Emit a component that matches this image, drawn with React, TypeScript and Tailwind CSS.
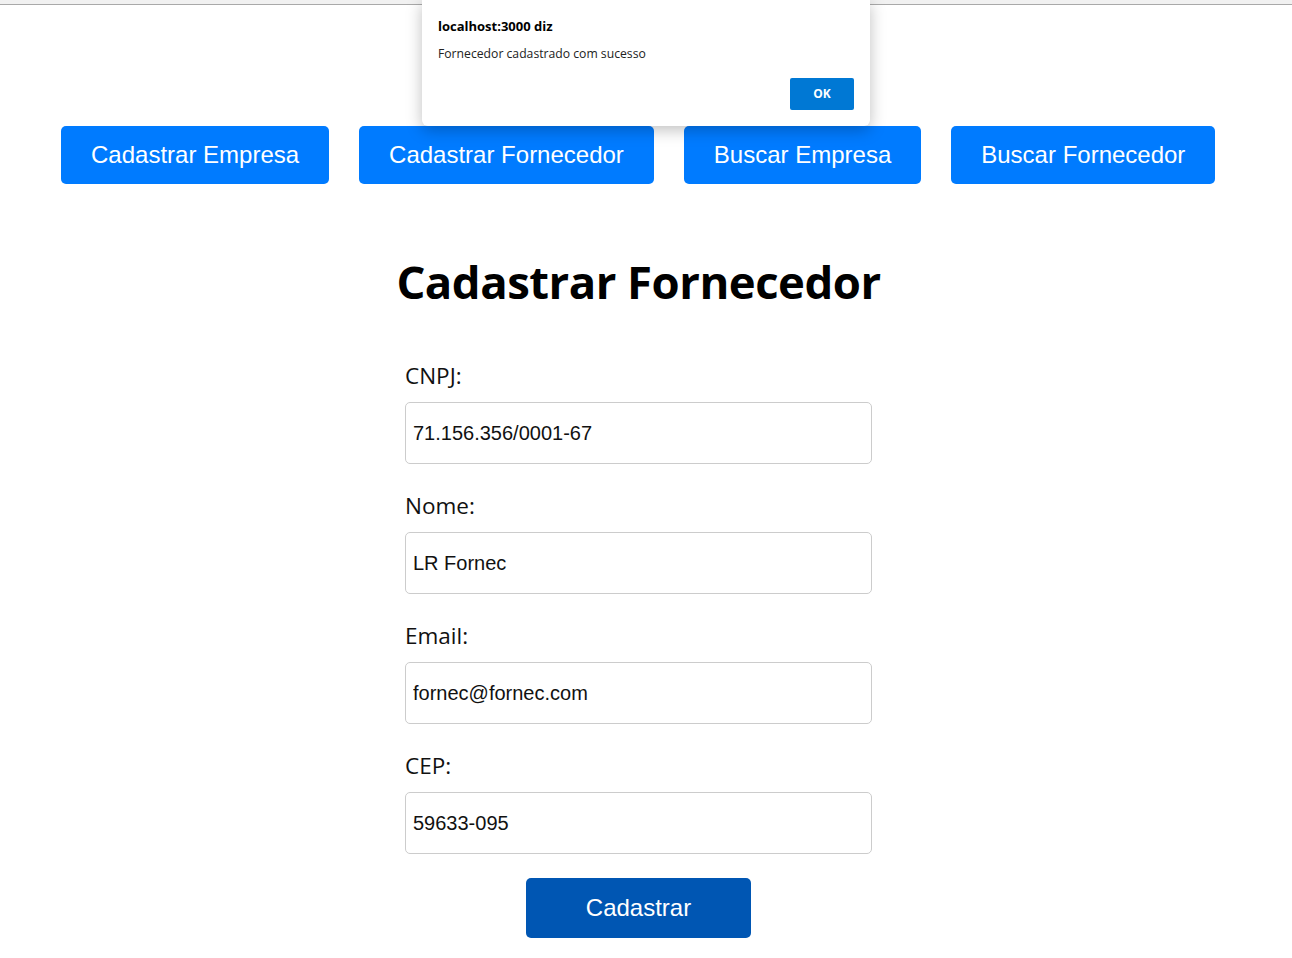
const navItems = [
  "Cadastrar Empresa",
  "Cadastrar Fornecedor",
  "Buscar Empresa",
  "Buscar Fornecedor",
];

const fields = [
  { label: "CNPJ:", value: "71.156.356/0001-67" },
  { label: "Nome:", value: "LR Fornec" },
  { label: "Email:", value: "fornec@fornec.com" },
  { label: "CEP:", value: "59633-095" },
];

const App = () => {
  return (
    <div className="relative min-h-[958px] bg-white">
      {/* browser strip */}
      <div className="h-[5px] bg-[#f1f1f1] border-b border-[#a9a9a9]" />

      <div className="w-[1277px]">
        {/* nav buttons */}
        <nav className="flex gap-[30px] pl-[61px] pt-[121px]">
          {navItems.map((item) => (
            <button
              key={item}
              className="h-[58px] px-[30px] rounded-[5px] bg-[#007bff] text-white text-[24px] font-['Liberation_Sans',Arial,sans-serif]"
            >
              {item}
            </button>
          ))}
        </nav>

        {/* form */}
        <main className="flex flex-col items-center">
          <h1 className="mt-[69px] text-[45.5px] leading-[56px] font-bold text-black font-['Open_Sans','Noto_Sans',sans-serif] tracking-[-0.5px]">
            Cadastrar Fornecedor
          </h1>

          <form className="w-[467px] mt-[53px] flex flex-col">
            {fields.map((f) => (
              <div key={f.label} className="flex flex-col mb-[28px]">
                <label className="text-[22.5px] leading-[28px] text-[#111] font-['Open_Sans','Noto_Sans',sans-serif] mb-[12px]">
                  {f.label}
                </label>
                <input
                  readOnly
                  value={f.value}
                  className="h-[62px] px-[7px] border border-[#cccccc] rounded-[5px] text-[20px] text-[#111] font-['Liberation_Sans',Arial,sans-serif] outline-none"
                />
              </div>
            ))}
            <button
              type="button"
              className="self-center -mt-[4px] w-[225px] h-[60px] rounded-[5px] bg-[#0056b3] text-white text-[24px] font-['Liberation_Sans',Arial,sans-serif]"
            >
              Cadastrar
            </button>
          </form>
        </main>
      </div>

      {/* alert dialog */}
      <div className="absolute left-[422px] top-0 w-[448px] h-[126px] bg-white rounded-b-[6px] shadow-[0_4px_16px_rgba(0,0,0,0.25)] font-['Open_Sans','Noto_Sans',sans-serif] px-[16px]">
        <div className="pt-[16px] text-[13px] leading-[20px] font-bold text-black">
          localhost:3000 diz
        </div>
        <div className="mt-[8px] text-[12.2px] leading-[20px] text-[#222]">
          Fornecedor cadastrado com sucesso
        </div>
        <div className="flex justify-end">
          <button className="mt-[14px] w-[64px] h-[32px] rounded-[2px] bg-[#0078d4] text-white text-[12px] font-bold">
            OK
          </button>
        </div>
      </div>
    </div>
  );
};

export default App;
